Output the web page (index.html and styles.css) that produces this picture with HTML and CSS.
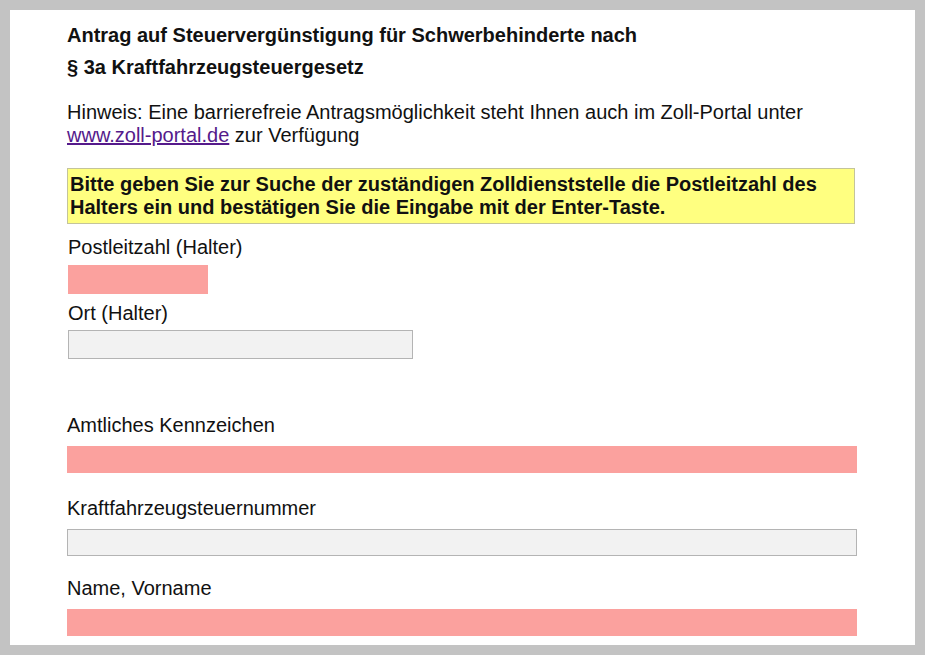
FILE: index.html
```html
<!DOCTYPE html>
<html>
<head>
    <title>Antrag Steuervergünstigung</title>
    <link rel="stylesheet" href="styles.css">
</head>
<body>
    <div class="page">
        <!-- Kopf -->
        <h1 class="title">Antrag auf Steuervergünstigung für Schwerbehinderte nach<br>§ 3a Kraftfahrzeugsteuergesetz</h1>

        <p class="hint">Hinweis: Eine barrierefreie Antragsmöglichkeit steht Ihnen auch im Zoll-Portal unter<br><a href="#">www.zoll-portal.de</a> zur Verfügung</p>

        <div class="notice">Bitte geben Sie zur Suche der zuständigen Zolldienststelle die Postleitzahl des Halters ein und bestätigen Sie die Eingabe mit der Enter-Taste.</div>

        <!-- Halter -->
        <div class="field small plz-field">
            <label>Postleitzahl (Halter)</label>
            <div class="box required plz"></div>
        </div>
        <div class="field small ort-field">
            <label>Ort (Halter)</label>
            <div class="box optional ort"></div>
        </div>

        <!-- Fahrzeug -->
        <div class="field wide kennzeichen">
            <label>Amtliches Kennzeichen</label>
            <div class="box required"></div>
        </div>
        <div class="field wide steuernr">
            <label>Kraftfahrzeugsteuernummer</label>
            <div class="box optional"></div>
        </div>
        <div class="field wide name">
            <label>Name, Vorname</label>
            <div class="box required"></div>
        </div>
    </div>
</body>
</html>
```

FILE: styles.css
```css
:root {
    --frame: #c3c3c3;
    --required: #fba19e;
    --optional: #f2f2f2;
    --notice: #ffff80;
    --text: #111111;
}

body {
    margin: 0;
    padding: 10px;
    background: var(--frame);
    font-family: "Liberation Sans", Arial, sans-serif;
    color: var(--text);
}

.page {
    background: #ffffff;
    width: 848px;
    height: 626px;
    padding: 9px 0 0 57px;
    overflow: hidden;
}

.title {
    margin: 0;
    font-size: 20px;
    font-weight: bold;
    line-height: 32px;
}

.hint {
    margin: 18px 0 0;
    font-size: 20px;
    line-height: 23px;
}

.hint a {
    color: #551a8b;
}

.notice {
    margin-top: 21px;
    width: 782px;
    padding: 4px 2px;
    background: var(--notice);
    border: 1px solid #c4c49a;
    font-size: 20px;
    font-weight: bold;
    line-height: 23px;
}

.field label {
    display: block;
    font-size: 20px;
    line-height: 23px;
}

.field.small {
    padding-left: 1px;
}

.field.small .box {
    height: 29px;
}

.plz-field {
    margin-top: 12px;
}

.plz-field .box {
    margin-top: 6px;
}

.ort-field {
    margin-top: 8px;
}

.ort-field .box {
    margin-top: 5px;
}

.field.wide .box {
    width: 790px;
    height: 27px;
    margin-top: 9px;
}

.kennzeichen {
    margin-top: 55px;
}

.steuernr {
    margin-top: 24px;
}

.name {
    margin-top: 21px;
}

.name .box {
    margin-top: 4px;
}

.box {
    box-sizing: border-box;
}

.box.required {
    background: var(--required);
}

.box.optional {
    background: var(--optional);
    border: 1px solid #b4b4b4;
}

.plz {
    width: 140px;
}

.ort {
    width: 345px;
}
```
